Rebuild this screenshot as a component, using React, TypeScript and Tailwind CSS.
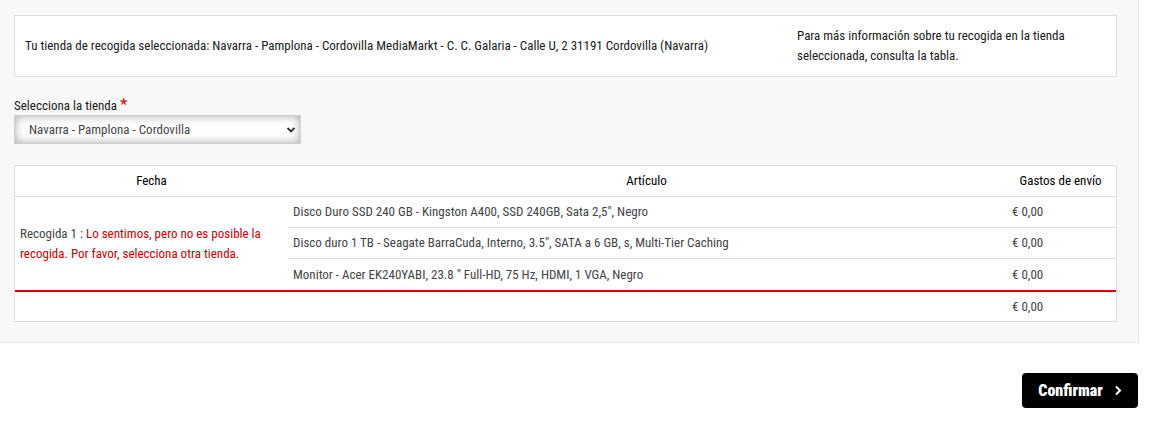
import React from "react";

export default function App() {
  const items = [
    'Disco Duro SSD 240 GB - Kingston A400, SSD 240GB, Sata 2,5", Negro',
    'Disco duro 1 TB - Seagate BarraCuda, Interno, 3.5", SATA a 6 GB, s, Multi-Tier Caching',
    'Monitor - Acer EK240YABI, 23.8 " Full-HD, 75 Hz, HDMI, 1 VGA, Negro',
  ];
  return (
    <div className="w-[1150px] h-[424px] bg-white text-[13px] text-[#1a1a1a] font-[Roboto,sans-serif] font-stretch-condensed">
      <div className="w-[1139px] bg-[#f8f8f8] border-r border-b border-[#e4e4e4] pt-[15px] pl-[14px] pr-[21px] pb-[20px]">
        <div className="flex items-center h-[62px] bg-white border border-[#dddddd]">
          <div className="pl-[10px] w-[782px] whitespace-nowrap">
            Tu tienda de recogida seleccionada: Navarra - Pamplona - Cordovilla MediaMarkt - C. C. Galaria - Calle U, 2 31191 Cordovilla (Navarra)
          </div>
          <div className="w-[292px] leading-[20px]">
            Para más información sobre tu recogida en la tienda seleccionada, consulta la tabla.
          </div>
        </div>
        <div className="mt-[21px] h-[16px] leading-[16px] flex items-start">
          <span>Selecciona la tienda</span>
          <span className="ml-[3px] text-[#e00000] text-[17px] leading-[12px]">*</span>
        </div>
        <div className="relative mt-[1px] w-[287px] h-[29px] border border-[#d0d0d0] bg-white shadow-[inset_0_0_10px_rgba(0,0,0,0.35)] flex items-center pl-[14px] text-[#444]">
          Navarra - Pamplona - Cordovilla
          <svg className="absolute right-[4px] top-[10px]" width="10" height="8" viewBox="0 0 10 8">
            <path d="M1.5 2 L5 5.5 L8.5 2" fill="none" stroke="#333" strokeWidth="1.8" />
          </svg>
        </div>
        <div className="mt-[21px] bg-white border border-[#dddddd]">
          <div className="flex h-[31px] items-center text-black border-b border-[#dddddd]">
            <div className="w-[273px] text-center">Fecha</div>
            <div className="w-[717px] text-center">Artículo</div>
            <div className="flex-1 text-center">Gastos de envío</div>
          </div>
          <div className="flex">
            <div className="w-[273px] flex items-center pl-[5px] pr-[8px] leading-[20px] text-[#444]">
              <div>
                Recogida 1 : <span className="text-[#cc0000]">Lo sentimos, pero no es posible la recogida. Por favor, selecciona otra tienda.</span>
              </div>
            </div>
            <div className="flex-1">
              {items.map((it, i) => (
                <div key={i} className={"flex items-center text-[#444] " + (i < 2 ? "h-[31px] border-b border-[#dddddd]" : "h-[31px]")}>
                  <div className="w-[717px] pl-[5px]">{it}</div>
                  <div className="flex-1 pl-[7px]">€ 0,00</div>
                </div>
              ))}
            </div>
          </div>
          <div className="flex h-[31px] items-center border-t-2 border-[#dd0000] text-[#444]">
            <div className="w-[990px]"></div>
            <div className="flex-1 pl-[7px]">€ 0,00</div>
          </div>
        </div>
      </div>
      <div className="flex justify-end pr-[12px] pt-[30px]">
        <button className="flex items-center gap-[11px] h-[35px] w-[116px] justify-center bg-black text-white rounded-[4px] font-black text-[16px] font-stretch-condensed">
          Confirmar
          <svg width="8" height="11" viewBox="0 0 8 11">
            <path d="M2 1.5 L6 5.5 L2 9.5" fill="none" stroke="#fff" strokeWidth="2" />
          </svg>
        </button>
      </div>
    </div>
  );
}
